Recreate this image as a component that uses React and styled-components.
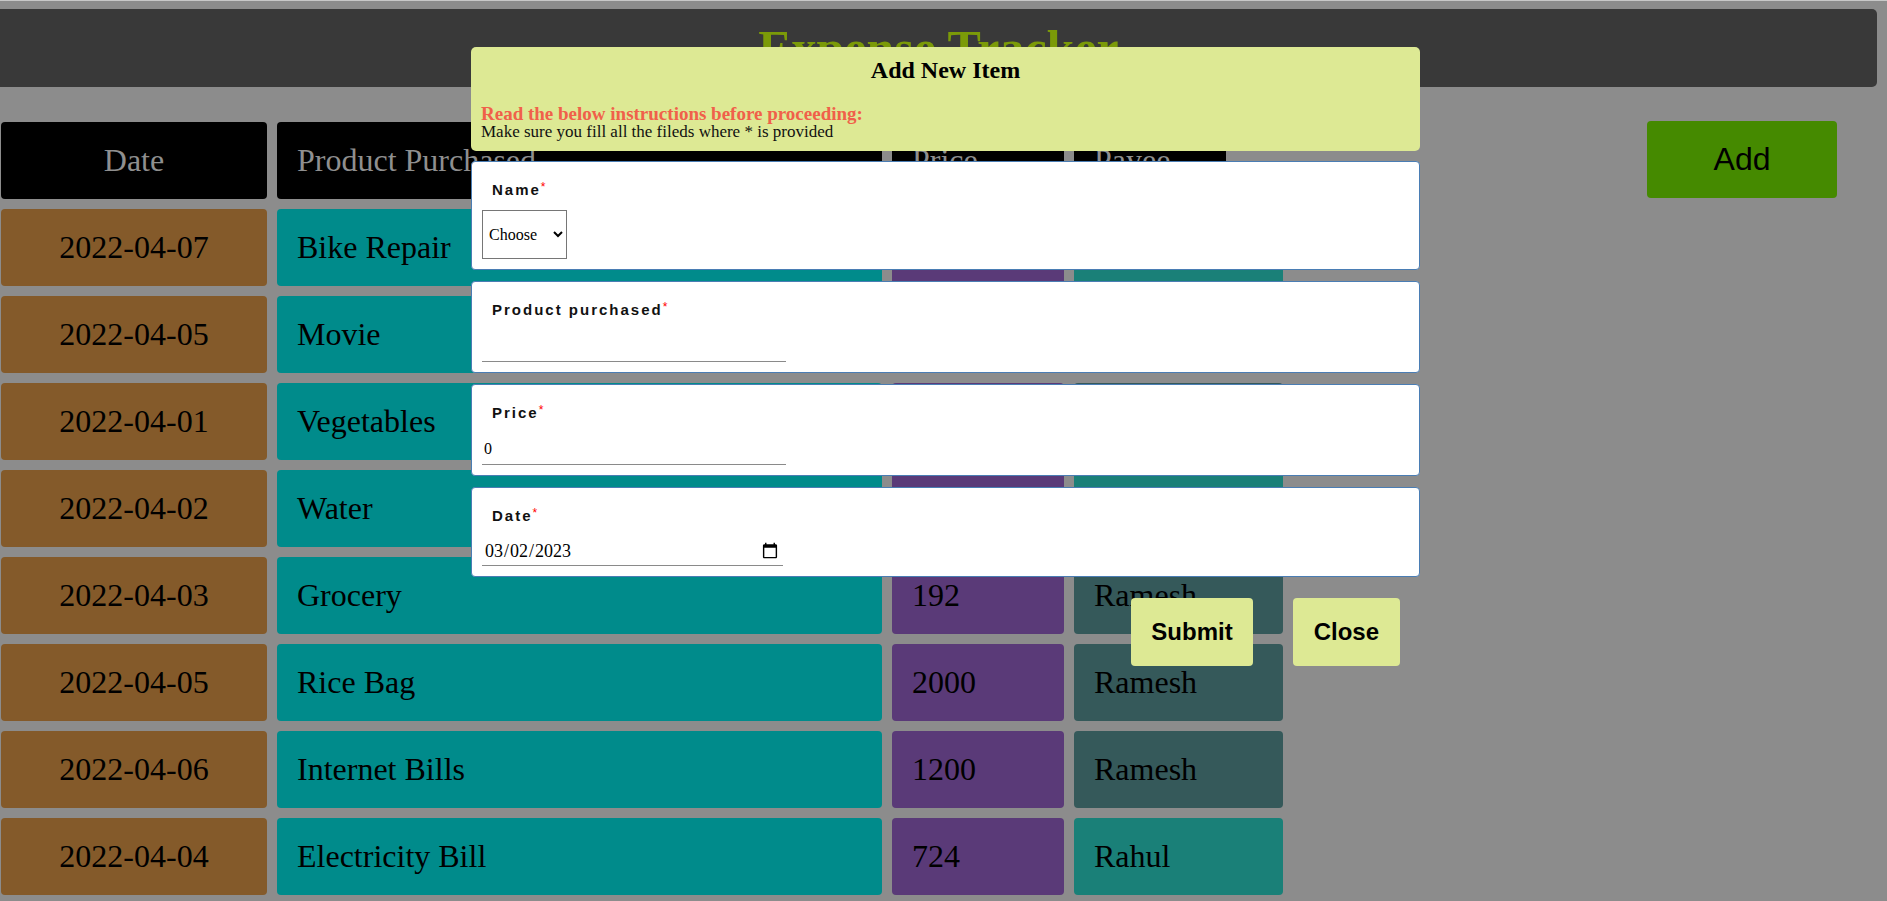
import React from "react";
import styled, { createGlobalStyle } from "styled-components";

const GlobalStyle = createGlobalStyle`
  html, body {
    margin: 0;
    padding: 0;
    background: #8c8c8c;
  }
  body {
    font-family: "Liberation Serif", "Times New Roman", serif;
  }
`;

const Page = styled.div`
  position: relative;
  min-height: 901px;
  border-top: 1px solid #c8c8c8;
  padding-top: 8px;
  box-sizing: border-box;
`;

const TitleBar = styled.header`
  width: 1877px;
  height: 78px;
  background: #393939;
  border-radius: 0 5px 5px 0;
  display: flex;
  align-items: center;
  justify-content: center;
`;

const Title = styled.h1`
  margin: 0;
  font-size: 50px;
  font-weight: bold;
  color: #7b9a08;
`;

const Main = styled.main`
  display: flex;
  justify-content: space-between;
  align-items: flex-start;
  margin-top: 34px;
  padding: 0 50px 0 1px;
`;

const Table = styled.div`
  display: flex;
  flex-direction: column;
  gap: 10px;
  margin-top: 1px;
`;

const Row = styled.div`
  display: flex;
  gap: 10px;
`;

const Cell = styled.div`
  width: ${(p) => p.$w}px;
  height: 77px;
  box-sizing: border-box;
  padding: 0 ${(p) => (p.$center ? 0 : 20)}px;
  display: flex;
  align-items: center;
  justify-content: ${(p) => (p.$center ? "center" : "flex-start")};
  background: ${(p) => p.$bg};
  color: ${(p) => (p.$head ? "#8f8f8f" : "#000")};
  border-radius: 4px;
  font-size: 32px;
  white-space: nowrap;
  overflow: hidden;
`;

const AddButton = styled.button`
  width: 190px;
  height: 77px;
  border: none;
  border-radius: 4px;
  background: #458a00;
  color: #000;
  font-family: "Liberation Sans", Arial, sans-serif;
  font-size: 32px;
  cursor: pointer;
`;

/* modal floats over the table */
const Modal = styled.div`
  position: absolute;
  top: 46px;
  left: 471px;
  width: 949px;
  display: flex;
  flex-direction: column;
`;

const ModalHead = styled.div`
  background: #dde994;
  border-radius: 5px;
  padding: 9px 10px 10px;
`;

const ModalTitle = styled.h3`
  margin: 0 0 20px;
  text-align: center;
  font-size: 24px;
  line-height: 28px;
  font-weight: bold;
  color: #000;
`;

const Warning = styled.div`
  color: #f0604a;
  font-weight: bold;
  font-size: 19px;
  line-height: 19px;
`;

const Note = styled.div`
  color: #111;
  font-size: 17px;
  line-height: 18px;
`;

const FieldCard = styled.div`
  margin-top: ${(p) => p.$gap}px;
  background: #fff;
  border: 1px solid #4a7db4;
  border-radius: 4px;
  padding: 10px;
`;

const Label = styled.label`
  display: block;
  padding: 9px 10px 11px;
  font-family: "Liberation Sans", Arial, sans-serif;
  font-weight: bold;
  font-size: 15px;
  line-height: 17px;
  letter-spacing: 2px;
  color: #111;
`;

const Star = styled.span`
  color: #f00;
  font-size: 12px;
  font-weight: normal;
  letter-spacing: 0;
  vertical-align: text-top;
  line-height: 12px;
`;

const Select = styled.select`
  display: block;
  margin-top: 1px;
  width: 85px;
  height: 49px;
  font-family: "Liberation Serif", serif;
  font-size: 16px;
  color: #000;
  background: #fff;
  border: 1px solid #767676;
  border-radius: 0;
  padding: 0 2px;
`;

const Input = styled.input`
  display: block;
  box-sizing: border-box;
  width: ${(p) => p.$w}px;
  height: ${(p) => p.$h}px;
  padding: 6px 2px 4px;
  border: none;
  border-bottom: 1px solid #8a8a8a;
  outline: none;
  font-family: "Liberation Serif", serif;
  font-size: ${(p) => p.$fs}px;
  color: #000;
  background: transparent;
`;

const Actions = styled.div`
  display: flex;
  justify-content: flex-end;
  gap: 40px;
  margin-top: 21px;
  padding-right: 20px;
`;

const ModalButton = styled.button`
  background: #dde994;
  border: none;
  border-radius: 4px;
  padding: 20px ${(p) => p.$px}px;
  font-family: "Liberation Sans", Arial, sans-serif;
  font-weight: bold;
  font-size: 24px;
  line-height: 28px;
  color: #000;
  cursor: pointer;
`;

const COLS = { date: 266, product: 605, price: 172, payee: 209 };
const PAYEE_BG = { Ramesh: "#35595a", Rahul: "#1a8078" };

const expenses = [
  { date: "2022-04-07", product: "Bike Repair", price: 450, payee: "Rahul" },
  { date: "2022-04-05", product: "Movie", price: 600, payee: "Rahul" },
  { date: "2022-04-01", product: "Vegetables", price: 320, payee: "Ramesh" },
  { date: "2022-04-02", product: "Water", price: 90, payee: "Rahul" },
  { date: "2022-04-03", product: "Grocery", price: 192, payee: "Ramesh" },
  { date: "2022-04-05", product: "Rice Bag", price: 2000, payee: "Ramesh" },
  { date: "2022-04-06", product: "Internet Bills", price: 1200, payee: "Ramesh" },
  { date: "2022-04-04", product: "Electricity Bill", price: 724, payee: "Rahul" },
];

const Field = ({ label, gap, children }) => (
  <FieldCard $gap={gap}>
    <Label>
      {label}
      <Star>*</Star>
    </Label>
    {children}
  </FieldCard>
);

export default function App() {
  return (
    <>
      <GlobalStyle />
      <Page>
        <TitleBar>
          <Title>Expense Tracker</Title>
        </TitleBar>

        <Main>
          <Table>
            <Row>
              <Cell $w={COLS.date} $bg="#000" $head $center>
                Date
              </Cell>
              <Cell $w={COLS.product} $bg="#000" $head>
                Product Purchased
              </Cell>
              <Cell $w={COLS.price} $bg="#000" $head>
                Price
              </Cell>
              <Cell $w={152} $bg="#000" $head>
                Payee
              </Cell>
            </Row>
            {expenses.map((e, i) => (
              <Row key={i}>
                <Cell $w={COLS.date} $bg="#845a2a" $center>
                  {e.date}
                </Cell>
                <Cell $w={COLS.product} $bg="#008b8b">
                  {e.product}
                </Cell>
                <Cell $w={COLS.price} $bg="#5a3a78">
                  {e.price}
                </Cell>
                <Cell $w={COLS.payee} $bg={PAYEE_BG[e.payee]}>
                  {e.payee}
                </Cell>
              </Row>
            ))}
          </Table>
          <AddButton>Add</AddButton>
        </Main>

        <Modal>
          <ModalHead>
            <ModalTitle>Add New Item</ModalTitle>
            <Warning>Read the below instructions before proceeding:</Warning>
            <Note>Make sure you fill all the fileds where * is provided</Note>
          </ModalHead>

          <Field label="Name" gap={10}>
            <Select defaultValue="">
              <option value="">Choose</option>
              <option value="Rahul">Rahul</option>
              <option value="Ramesh">Ramesh</option>
            </Select>
          </Field>
          <Field label="Product purchased" gap={11}>
            <Input type="text" $w={304} $h={33} $fs={16} />
          </Field>
          <Field label="Price" gap={11}>
            <Input type="number" defaultValue={0} $w={304} $h={33} $fs={16} />
          </Field>
          <Field label="Date" gap={11}>
            <Input type="date" defaultValue="2023-03-02" $w={301} $h={31} $fs={18} />
          </Field>

          <Actions>
            <ModalButton $px={20}>Submit</ModalButton>
            <ModalButton $px={21}>Close</ModalButton>
          </Actions>
        </Modal>
      </Page>
    </>
  );
}
